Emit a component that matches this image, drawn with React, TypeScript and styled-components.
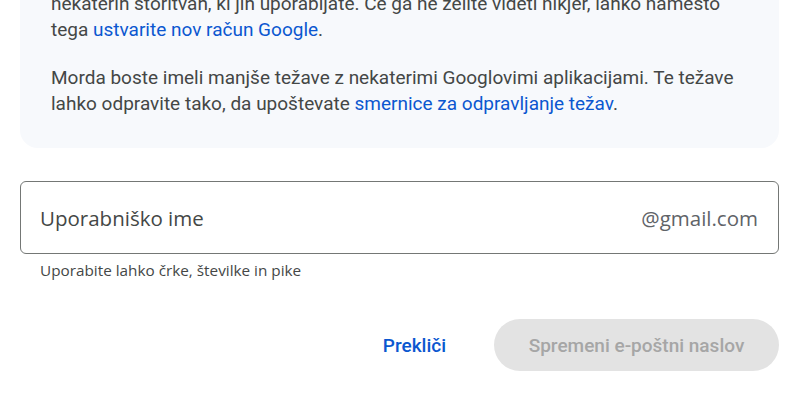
import React from "react";
import styled, { createGlobalStyle } from "styled-components";

const GlobalStyle = createGlobalStyle`
  html, body {
    margin: 0;
    padding: 0;
    background: #ffffff;
  }
  body {
    font-family: Roboto, "Noto Sans", Arial, sans-serif;
    color: #444746;
  }
`;

const Page = styled.div`
  width: 810px;
  height: 405px;
  overflow: hidden;
  display: flex;
  flex-direction: column;
  padding: 0 31px 0 20px;
  box-sizing: border-box;
`;

const InfoBox = styled.div`
  flex: none;
  margin-top: -58px;
  padding: 23px 20px 31px 31px;
  background: #f7f9fc;
  border-radius: 18px;
`;

const Paragraph = styled.p`
  margin: 0;
  font-size: 19px;
  line-height: 26px;
  color: #444746;
  white-space: nowrap;

  & + & {
    margin-top: 22px;
  }
`;

const Link = styled.a`
  color: #0b57d0;
  text-decoration: none;
`;

const Field = styled.div`
  flex: none;
  margin-top: 33px;
  height: 73px;
  box-sizing: border-box;
  border: 1px solid #747775;
  border-radius: 6px;
  display: flex;
  align-items: center;
  justify-content: space-between;
  padding: 0 20px 0 19px;
  font-family: "Open Sans", Roboto, sans-serif;
  font-size: 20.5px;
  color: #444746;
`;

const Placeholder = styled.span``;

const Suffix = styled.span`
  color: #5f6368;
`;

const Helper = styled.div`
  flex: none;
  margin-top: 6px;
  padding-left: 20px;
  font-family: "Open Sans", Roboto, sans-serif;
  font-size: 15.3px;
  line-height: 20px;
  color: #444746;
`;

const Actions = styled.div`
  flex: none;
  margin-top: 39px;
  display: flex;
  justify-content: flex-end;
  align-items: center;
  gap: 24px;
`;

const Button = styled.button<{ $variant: "text" | "filled" }>`
  height: 52px;
  border: none;
  border-radius: 26px;
  font-family: Roboto, "Open Sans", sans-serif;
  font-size: 19px;
  font-weight: 500;
  cursor: pointer;
  padding: ${(p) => (p.$variant === "text" ? "0 24px" : "0")};
  background: ${(p) => (p.$variant === "text" ? "transparent" : "#e3e3e3")};
  color: ${(p) => (p.$variant === "text" ? "#0b57d0" : "#a6a6a6")};
  width: ${(p) => (p.$variant === "text" ? "auto" : "285px")};
`;

export default function App() {
  return (
    <>
      <GlobalStyle />
      <Page>
        <InfoBox>
          <Paragraph>
            Vaš e-poštni naslov bo prikazan drugim uporabnikom v Googlovih in
            <br />
            nekaterih storitvah, ki jih uporabljate. Če ga ne želite videti nikjer, lahko namesto
            <br />
            tega <Link href="#">ustvarite nov račun Google</Link>.
          </Paragraph>
          <Paragraph>
            Morda boste imeli manjše težave z nekaterimi Googlovimi aplikacijami. Te težave
            <br />
            lahko odpravite tako, da upoštevate{" "}
            <Link href="#">smernice za odpravljanje težav</Link>.
          </Paragraph>
        </InfoBox>
        <Field>
          <Placeholder>Uporabniško ime</Placeholder>
          <Suffix>@gmail.com</Suffix>
        </Field>
        <Helper>Uporabite lahko črke, številke in pike</Helper>
        <Actions>
          <Button $variant="text">Prekliči</Button>
          <Button $variant="filled" disabled>
            Spremeni e-poštni naslov
          </Button>
        </Actions>
      </Page>
    </>
  );
}
